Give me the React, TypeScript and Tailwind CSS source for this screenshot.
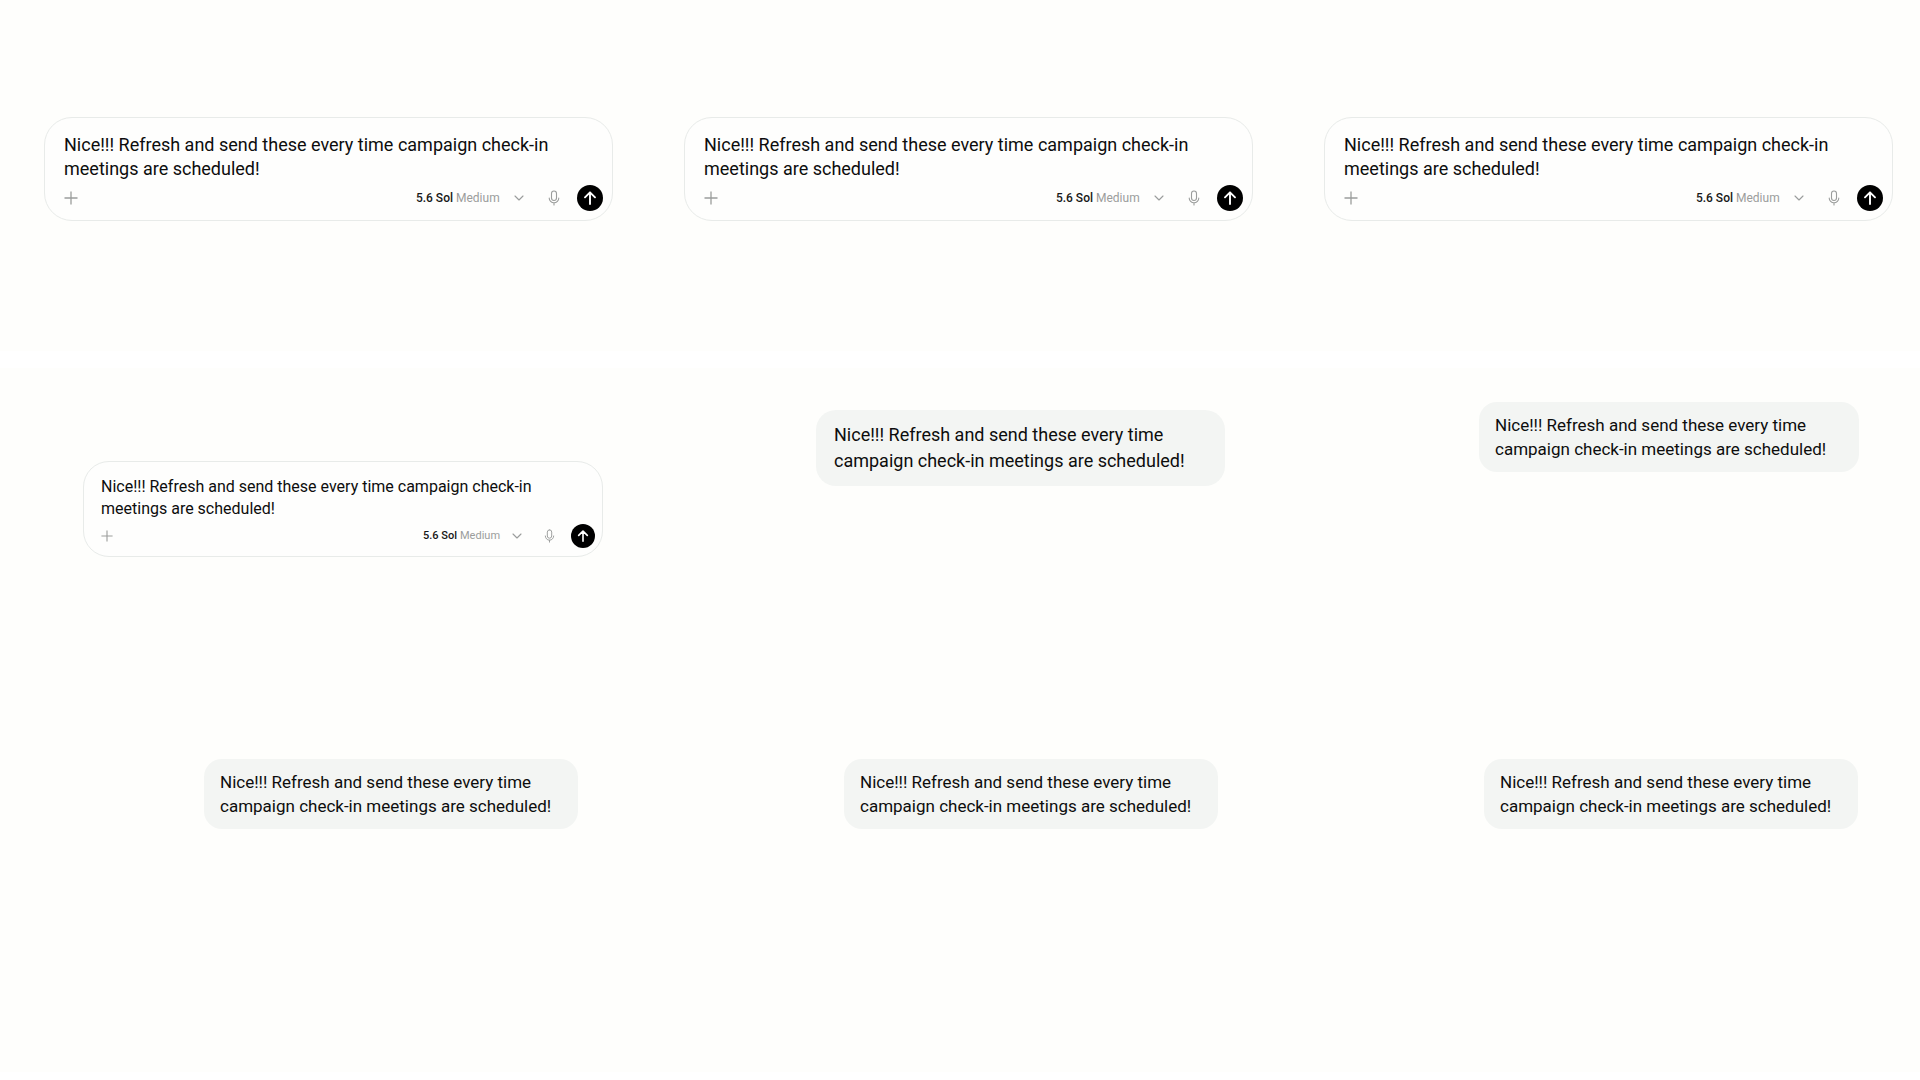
import React from 'react';
import clsx from "clsx";

const MESSAGE = "Nice!!! Refresh and send these every time campaign check-in meetings are scheduled!";

const PlusIcon = ({ className }: { className: string }) => (
    <svg viewBox="0 0 14 14" fill="none" stroke="currentColor" strokeWidth="1.3" className={className} aria-hidden="true">
        <path d="M7 .5v13M.5 7h13" />
    </svg>
);

const ChevronIcon = ({ className }: { className: string }) => (
    <svg viewBox="0 0 10 6" fill="none" stroke="currentColor" strokeWidth="1.1" strokeLinecap="round" strokeLinejoin="round" className={className} aria-hidden="true">
        <path d="M1 1l4 4 4-4" />
    </svg>
);

const MicIcon = ({ className }: { className: string }) => (
    <svg viewBox="0 0 12 16" fill="none" stroke="currentColor" strokeWidth="1.1" strokeLinecap="round" className={className} aria-hidden="true">
        <rect x="3.5" y="1" width="5" height="9.5" rx="2.5" />
        <path d="M1.2 8a4.8 4.8 0 0 0 9.6 0M6 12.8V15" />
    </svg>
);

const ArrowUpIcon = ({ className }: { className: string }) => (
    <svg viewBox="0 0 14 14" fill="none" stroke="currentColor" strokeWidth="1.9" strokeLinecap="round" strokeLinejoin="round" className={className} aria-hidden="true">
        <path d="M7 13V1.5M2 6.3l5-5 5 5" />
    </svg>
);

const Composer = ({ id, small = false }: { id: string; small?: boolean }) => (
    <form
        onSubmit={(e) => e.preventDefault()}
        className={clsx(
            "w-full border border-[#e8ebe9] bg-[#fefefd]",
            small ? "rounded-[26px] pt-[14px] pb-2 pl-[17px] pr-[7px]" : "rounded-[28px] pt-[15px] pb-[9px] pl-[19px] pr-[9px]"
        )}
    >
        <textarea
            aria-label="Message"
            rows={2}
            defaultValue={MESSAGE}
            className={clsx(
                "block w-full resize-none overflow-hidden bg-transparent outline-none",
                small ? "text-[16px] leading-[22px]" : "text-[18px] leading-[24px]"
            )}
        />
        <div className="mt-1 flex items-center justify-between text-[#9b9d9c]">
            <button type="button" aria-label="Add">
                <PlusIcon className={small ? "size-3" : "size-[14px]"} />
            </button>

            <div className="flex items-center">
                {/* MODEL */}
                <div className={clsx("flex items-center gap-[3px]", small ? "text-[11px]" : "text-[12px]")}>
                    <label htmlFor={id} className="font-medium text-[#171717]">5.6 Sol</label>
                    <div className="grid items-center">
                        <select
                            id={id}
                            className={clsx("col-start-1 row-start-1 appearance-none bg-transparent outline-none", small ? "pr-[21px]" : "pr-6")}
                        >
                            <option>Medium</option>
                        </select>
                        <ChevronIcon className="pointer-events-none col-start-1 row-start-1 w-[10px] justify-self-end" />
                    </div>
                </div>
                <button type="button" aria-label="Dictate" className={small ? "ml-[22px] mr-4" : "ml-6 mr-[17px]"}>
                    <MicIcon className={small ? "h-[14px] w-[11px]" : "h-4 w-3"} />
                </button>
                <button
                    type="submit"
                    aria-label="Send"
                    className={clsx("flex items-center justify-center rounded-full bg-black text-white", small ? "size-6" : "size-[26px]")}
                >
                    <ArrowUpIcon className={small ? "size-3" : "size-[14px]"} />
                </button>
            </div>
        </div>
    </form>
);

const bubbleSizes = {
    sm: "w-[374px] rounded-[18px] pl-4 pr-3 py-[11px] text-[17px] leading-[24px]",
    md: "w-[380px] rounded-[18px] pl-4 pr-3 py-[11px] text-[17px] leading-[24px]",
    lg: "w-[409px] rounded-[20px] pl-[18px] pr-4 py-3 text-[18px] leading-[26px]",
};

const Bubble = ({ size = "sm" }: { size?: keyof typeof bubbleSizes }) => (
    <p className={clsx("bg-[#f3f5f3]", bubbleSizes[size])}>{MESSAGE}</p>
);

const App = () => {
    const composers = ["model-1", "model-2", "model-3"];
    const bubbles = [1, 2, 3];

    return (
        <main className="min-h-screen bg-white font-['Roboto',sans-serif] text-[#0d0d0d]">
            <section className="grid grid-cols-3 bg-[#fefefc] pt-[117px] pb-[130px]">
                {composers.map((id) => (
                    <div key={id} className="pl-11 pr-[27px]">
                        <Composer id={id} />
                    </div>
                ))}
            </section>

            <section className="mt-[17px] bg-[#fefefc] pb-[243px]">
                <div className="grid grid-cols-3 items-start">
                    <div className="pt-[93px] pb-[156px] pl-[83px] pr-[37px]">
                        <Composer id="model-4" small />
                    </div>
                    <div className="flex justify-end pt-[42px] pr-[55px]">
                        <Bubble size="lg" />
                    </div>
                    <div className="flex justify-end pt-[34px] pr-[61px]">
                        <Bubble size="md" />
                    </div>
                </div>
                <div className="grid grid-cols-3 pt-[46px]">
                    {bubbles.map((it) => (
                        <div key={it} className="flex justify-end pr-[62px]">
                            <Bubble />
                        </div>
                    ))}
                </div>
            </section>
        </main>
    );
};

export default App;
